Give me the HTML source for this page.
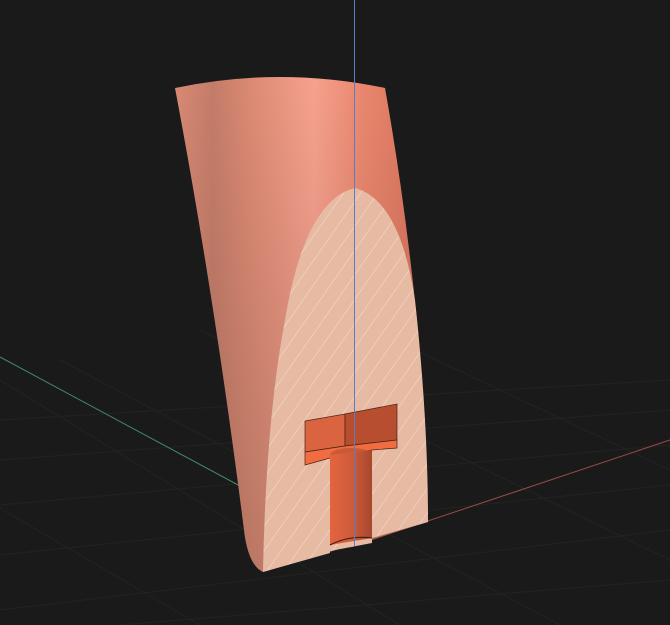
<!DOCTYPE html>
<html><head><style>
html,body{margin:0;padding:0;background:#1a1a1a;width:670px;height:625px;overflow:hidden}
</style></head><body>
<svg width="670" height="625" viewBox="0 0 670 625" xmlns="http://www.w3.org/2000/svg">
<defs>
<linearGradient id="body" x1="0" y1="0" x2="1" y2="0" gradientUnits="objectBoundingBox">
<stop offset="0" stop-color="#d98a74"/>
<stop offset="0.15" stop-color="#c47c69"/>
<stop offset="0.3" stop-color="#dc8a73"/>
<stop offset="0.55" stop-color="#f6a18e"/>
<stop offset="0.75" stop-color="#e9866d"/>
<stop offset="1" stop-color="#d8705a"/>
</linearGradient>
<linearGradient id="shade" x1="0" y1="0" x2="0" y2="1">
<stop offset="0" stop-color="#6a4a40" stop-opacity="0"/>
<stop offset="0.5" stop-color="#6a4a40" stop-opacity="0.15"/>
<stop offset="1" stop-color="#6a4a40" stop-opacity="0.3"/>
</linearGradient>
<pattern id="hatch" width="14" height="14" patternUnits="userSpaceOnUse" patternTransform="rotate(35)">
<rect width="14" height="14" fill="#e7baa4"/>
<line x1="0" y1="0" x2="0" y2="14" stroke="#f6e0d4" stroke-width="1"/>
</pattern>
<linearGradient id="stem" x1="0" y1="0" x2="1" y2="0">
<stop offset="0" stop-color="#e3643f"/>
<stop offset="0.5" stop-color="#cf5c3c"/>
<stop offset="1" stop-color="#a8472b"/>
</linearGradient>
</defs>
<rect width="670" height="625" fill="#1a1a1a"/>
<g stroke="#232323" stroke-width="1" fill="none">
<path d="M0 420 L670 380 M0 460 L670 410 M0 505 L670 445 M0 555 L670 485 M0 610 L670 530 M120 625 L670 580"/>
<path d="M0 380 L400 625 M60 360 L560 625 M-100 450 L200 625 M200 330 L670 560 M330 310 L670 470"/>
</g>
<line x1="0" y1="357" x2="240" y2="486" stroke="#3f8a63" stroke-width="1"/>
<line x1="350" y1="547" x2="670" y2="440" stroke="#9a4b44" stroke-width="1"/>
<path d="M175 88 Q280 66 385 88 Q405 200 418 330 Q426 430 428 522 L263 572 Q248 565 244 530 Q215 300 175 88 Z" fill="url(#body)"/>
<path d="M175 88 Q280 66 385 88 Q405 200 418 330 Q426 430 428 522 L263 572 Q248 565 244 530 Q215 300 175 88 Z" fill="url(#shade)"/>
<path d="M355 188 Q400 200 415 300 Q428 420 428 522 L372 538 L372 543 L330 551 L330 553 L263 572 Q266 420 285 320 Q305 200 355 188 Z" fill="url(#hatch)"/>
<path d="M305 421 L345 414 L345 446 L305 452 Z" fill="#d9643f" stroke="#4a2218" stroke-width="0.7"/>
<path d="M345 414 L397 404 L397 440 L345 446 Z" fill="#b84e30" stroke="#4a2218" stroke-width="0.7"/>
<path d="M305 452 L345 446 L397 440 L397 448 L372 450 L330 458 L305 465 Z" fill="#f26c40" stroke="#4a2218" stroke-width="0.7"/>
<ellipse cx="351" cy="455" rx="21" ry="7" fill="#c85a3a"/>
<path d="M330 455 L372 450 L372 538 L330 545 Z" fill="url(#stem)"/>
<path d="M330 545 Q350 535 372 538" fill="none" stroke="#3a1a10" stroke-width="1"/>
<line x1="354.5" y1="0" x2="354.5" y2="546" stroke="#5a7fc0" stroke-width="1"/>
</svg>
</body></html>
